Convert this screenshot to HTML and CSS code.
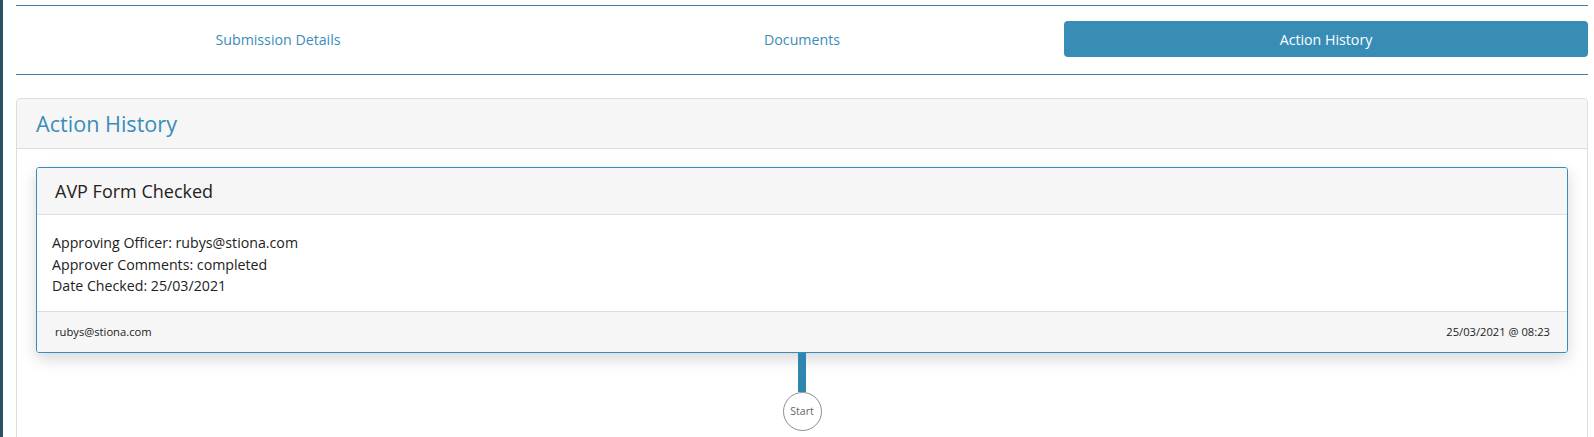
FILE: index.html
```html
<!DOCTYPE html>
<html>
<head>
<meta charset="utf-8">
<link rel="stylesheet" href="styles.css">
</head>
<body>
<div class="rail"></div>
<main class="content">
  <nav class="tabs">
    <a class="tab">Submission Details</a>
    <a class="tab">Documents</a>
    <a class="tab active">Action History</a>
  </nav>
  <section class="panel">
    <header class="panel-head"><h2>Action History</h2></header>
    <div class="panel-body">
      <div class="card">
        <div class="card-head">AVP Form Checked</div>
        <div class="card-body">
          <div>Approving Officer: rubys@stiona.com</div>
          <div>Approver Comments: completed</div>
          <div>Date Checked: 25/03/2021</div>
        </div>
        <div class="card-foot">
          <span>rubys@stiona.com</span>
          <span>25/03/2021 @ 08:23</span>
        </div>
      </div>
      <div class="timeline">
        <div class="stem"></div>
        <div class="start">Start</div>
      </div>
    </div>
  </section>
</main>
</body>
</html>
```
FILE: styles.css
```css
html, body {
  margin: 0;
  padding: 0;
  height: 100%;
  overflow: hidden;
}
body {
  display: flex;
  background: #fff;
  font-family: "Open Sans", "Noto Sans", sans-serif;
  color: #222;
}
.rail {
  width: 3px;
  flex: none;
  background: #2d5160;
}
.content {
  flex: 1;
  padding: 5px 6px 0 13px;
  min-width: 0;
}
.tabs {
  display: grid;
  grid-template-columns: 1fr 1fr 1fr;
  border-top: 1px solid #3b7fa2;
  border-bottom: 1px solid #3b7fa2;
  padding: 15px 0 17px;
}
.tab {
  height: 36px;
  display: flex;
  align-items: center;
  justify-content: center;
  font-size: 14.2px;
  color: #3a8dbb;
  border-radius: 4px;
}
.tab.active {
  background: #388db6;
  color: #fff;
}
.panel {
  margin-top: 23px;
  border: 1px solid #ddd;
  border-radius: 4px;
  height: 350px;
}
.panel-head {
  background: #f6f6f6;
  border-bottom: 1px solid #ddd;
  height: 49px;
  display: flex;
  align-items: center;
  padding-left: 19px;
  border-radius: 4px 4px 0 0;
}
.panel-head h2 {
  margin: 0;
  font-weight: 400;
  font-size: 21.6px;
  color: #3a8dbb;
}
.panel-body {
  padding: 18px 19px 0 19px;
}
.card {
  border: 1px solid #3a8dbb;
  border-radius: 3px;
  box-shadow: 0 6px 16px rgba(0,0,0,0.16);
  overflow: hidden;
}
.card-head {
  background: #f6f6f6;
  border-bottom: 1px solid #ddd;
  height: 46px;
  display: flex;
  align-items: center;
  padding-left: 18px;
  font-size: 18px;
  color: #222;
}
.card-body {
  padding: 17px 15px 14px;
  font-size: 14.2px;
  line-height: 21.5px;
  color: #222;
}
.card-foot {
  background: #f6f6f6;
  border-top: 1px solid #ddd;
  height: 40px;
  display: flex;
  align-items: center;
  justify-content: space-between;
  padding: 0 17px 0 18px;
  font-size: 11.2px;
  color: #222;
}
.timeline {
  display: flex;
  flex-direction: column;
  align-items: center;
}
.stem {
  width: 8px;
  height: 39px;
  background: #2f87b0;
}
.start {
  width: 37px;
  height: 37px;
  border: 1px solid #8a8f94;
  border-radius: 50%;
  display: flex;
  align-items: center;
  justify-content: center;
  font-size: 10.5px;
  color: #666;
  background: #fff;
}
```
